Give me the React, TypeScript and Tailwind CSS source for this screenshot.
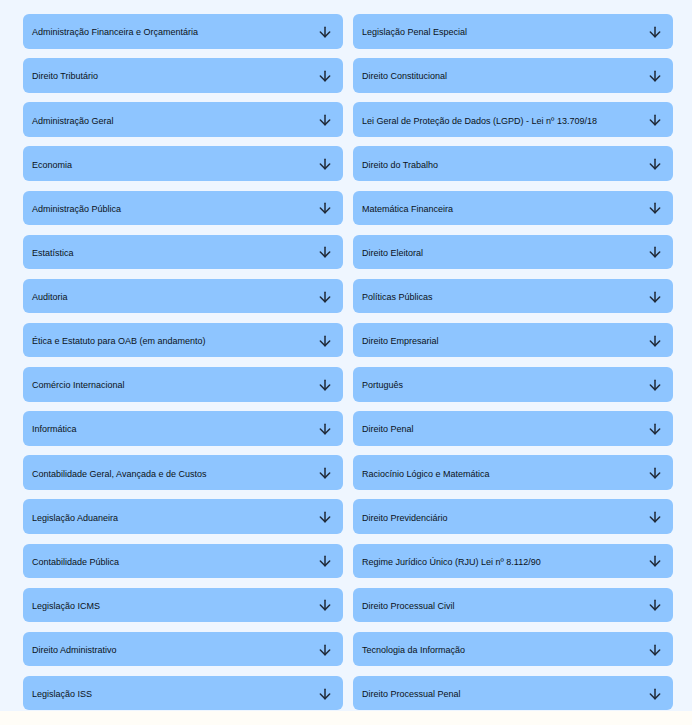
import { ArrowDown } from "lucide-react";

const left = [
  "Administração Financeira e Orçamentária",
  "Direito Tributário",
  "Administração Geral",
  "Economia",
  "Administração Pública",
  "Estatística",
  "Auditoria",
  "Ética e Estatuto para OAB (em andamento)",
  "Comércio Internacional",
  "Informática",
  "Contabilidade Geral, Avançada e de Custos",
  "Legislação Aduaneira",
  "Contabilidade Pública",
  "Legislação ICMS",
  "Direito Administrativo",
  "Legislação ISS",
];

const right = [
  "Legislação Penal Especial",
  "Direito Constitucional",
  "Lei Geral de Proteção de Dados (LGPD) - Lei nº 13.709/18",
  "Direito do Trabalho",
  "Matemática Financeira",
  "Direito Eleitoral",
  "Políticas Públicas",
  "Direito Empresarial",
  "Português",
  "Direito Penal",
  "Raciocínio Lógico e Matemática",
  "Direito Previdenciário",
  "Regime Jurídico Único (RJU) Lei nº 8.112/90",
  "Direito Processual Civil",
  "Tecnologia da Informação",
  "Direito Processual Penal",
];

function Subject({ title }: { title: string }) {
  return (
    <button className="flex h-[34.5px] w-full items-center justify-between rounded-[6px] bg-[#8ec5ff] pl-[9px] pr-[10px] text-left">
      <span className="pt-[3px] text-[9px] leading-none text-[#0b1220]">{title}</span>
      <ArrowDown size={16} strokeWidth={2.25} className="mt-[1px] text-[#1f2937]" />
    </button>
  );
}

export default function App() {
  const rows = left.map((l, i) => [l, right[i]]);
  return (
    <div className="min-h-[725px] bg-[#fffdf7]" style={{ fontFamily: '"Liberation Sans", Arial, sans-serif' }}>
      <section className="bg-[#eff6ff] pb-[1px] pt-[14px]">
        <div className="ml-[23px] grid w-[650px] grid-cols-2 gap-x-[10px] gap-y-[9.63px]">
          {rows.flatMap(([a, b]) => [<Subject key={a} title={a} />, <Subject key={b} title={b} />])}
        </div>
      </section>
    </div>
  );
}
